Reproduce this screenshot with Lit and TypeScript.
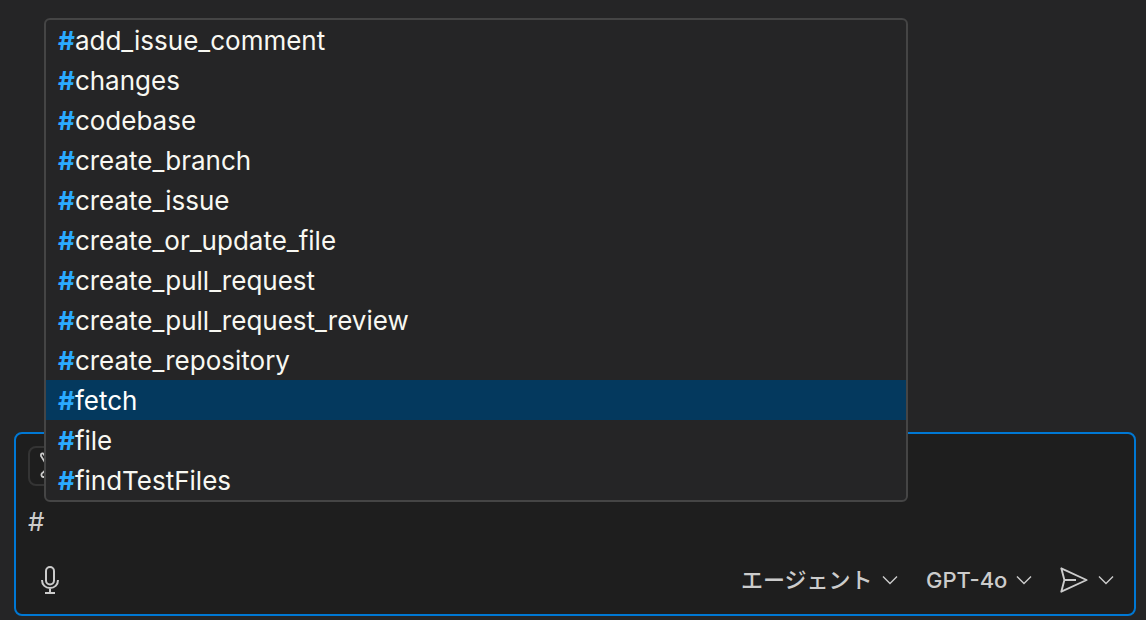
import { LitElement, html, css, svg } from "lit";
import { customElement, state } from "lit/decorators.js";

const chevron = html`<svg class="chevron" width="16" height="10" viewBox="0 0 16 10" aria-hidden="true">
  ${svg`<path d="M1 1.4 8 8.4 15 1.4" fill="none" stroke="currentColor" stroke-width="1.4"/>`}
</svg>`;

@customElement("app-root")
export class AppRoot extends LitElement {
  static styles = css`
    :host {
      display: flex;
      flex-direction: column;
      justify-content: flex-end;
      box-sizing: border-box;
      min-height: 100vh;
      padding: 0 10px 4px 14px;
      background: #252526;
      color: #cccccc;
      font: 24px/36px Inter, "Noto Sans CJK JP", sans-serif;
    }
    * { box-sizing: border-box; }
    .composer {
      display: flex;
      flex-direction: column;
      border: 2px solid #0078d4;
      border-radius: 8px;
      background: #1e1e1e;
      padding: 12px;
    }
    button, select, textarea {
      font: inherit;
      color: inherit;
      background: none;
      border: 0;
      margin: 0;
      padding: 0;
      outline: none;
    }
    button { display: flex; align-items: center; justify-content: center; }
    .tools {
      width: 40px;
      height: 40px;
      border: 2px solid #343434;
      border-radius: 8px;
    }
    .input { position: relative; display: flex; padding-top: 18px; }
    .input textarea {
      flex: 1;
      height: 36px;
      resize: none;
      overflow: hidden;
      font-size: 26px;
    }
    .suggest {
      position: absolute;
      left: 16px;
      bottom: 38px;
      width: 79%;
      margin: 0;
      padding: 0;
      list-style: none;
      border: 2px solid #454545;
      border-radius: 6px;
      background: #252526;
      color: #f8f8f2;
      font-size: 26px;
      line-height: 38px;
      overflow: hidden;
    }
    .option { padding: 2px 0 0 12px; cursor: pointer; white-space: nowrap; }
    .option.selected { background: #04395e; color: #ffffff; }
    .mark { color: #2aaaff; font-weight: 700; }
    .toolbar { display: flex; align-items: center; padding: 22px 8px 4px; }
    .mic { width: 28px; height: 36px; }
    .spacer { flex: 1; }
    .picker { display: flex; align-items: center; gap: 8px; margin-right: 28px; }
    .picker select { appearance: none; height: 36px; font-size: 22px; font-weight: 500; }
    .send { width: 28px; height: 36px; margin-right: 10px; }
    .more { width: 16px; height: 36px; }
    svg { display: block; flex: none; }
  `;

  @state() private selected = 9;

  private names = [
    "add_issue_comment", "changes", "codebase", "create_branch",
    "create_issue", "create_or_update_file", "create_pull_request",
    "create_pull_request_review", "create_repository", "fetch",
    "file", "findTestFiles",
  ];

  render() {
    return html`
      <form class="composer" @submit=${(e: Event) => e.preventDefault()}>
        <button class="tools" type="button" aria-label="ツール">
          <svg width="20" height="28" viewBox="0 0 20 28" fill="none" stroke="currentColor" stroke-width="1.8" aria-hidden="true">
            <path d="M5 1.5Q2.5 1 3 4L8 12 11 16 15 24 18 22 13 12 10 8ZM10 15 5 20.5Q2.5 22 4 24.5 6 26 8 23L12 17M12 10 17 3"/>
          </svg>
        </button>
        <div class="input">
          <textarea aria-label="チャット入力" rows="1" spellcheck="false" .value=${"#"}></textarea>
          <ul class="suggest" role="listbox" aria-label="候補">
            ${this.names.map((name, i) => html`
              <li class="option ${i === this.selected ? "selected" : ""}" role="option"
                aria-selected=${i === this.selected ? "true" : "false"}
                @click=${() => { this.selected = i; }}><span class="mark">#</span>${name}</li>`)}
          </ul>
        </div>
        <div class="toolbar">
          <button class="mic" type="button" aria-label="音声入力">
            <svg width="20" height="30" viewBox="0 0 20 30" fill="none" stroke="currentColor" stroke-width="2" aria-hidden="true">
              <rect x="6" y="2" width="8" height="17.5" rx="4"/>
              <path d="M2 15C2 20 5.5 23 10 23S18 20 18 15M10 23V28M5 28H15"/>
            </svg>
          </button>
          <span class="spacer"></span>
          <label class="picker">
            <select aria-label="モード"><option>エージェント</option></select>${chevron}
          </label>
          <label class="picker">
            <select aria-label="モデル"><option>GPT-4o</option></select>${chevron}
          </label>
          <button class="send" type="submit" aria-label="送信">
            <svg width="28" height="26" viewBox="0 0 28 26" fill="none" stroke="currentColor" stroke-width="1.9" stroke-linejoin="round" aria-hidden="true">
              <path d="M1.3 1.3 26.6 13 1.3 24.7 4.4 13ZM4.4 13H16"/>
            </svg>
          </button>
          <button class="more" type="button" aria-label="その他の送信オプション">${chevron}</button>
        </div>
      </form>
    `;
  }
}
